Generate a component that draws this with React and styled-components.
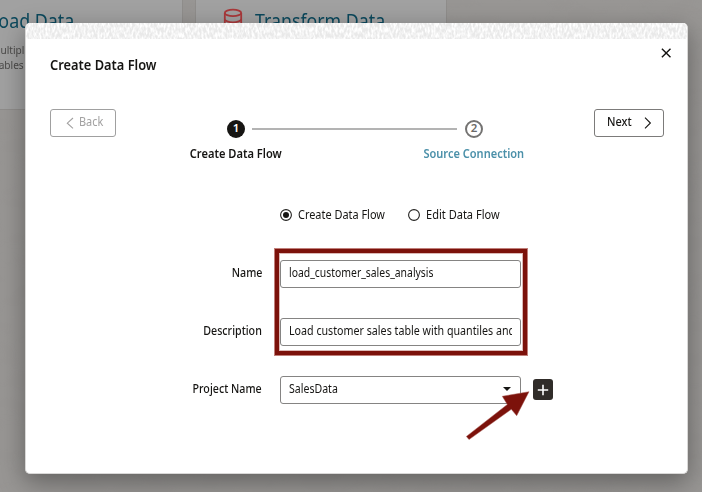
import React from 'react';
import styled, { createGlobalStyle } from 'styled-components';

const GlobalStyle = createGlobalStyle`
  * { box-sizing: border-box; }
  body {
    margin: 0;
    overflow: hidden;
    font-family: "Noto Sans", "Liberation Sans", sans-serif;
    font-size: 12px;
    line-height: 16px;
    color: #161513;
  }
`;

const Page = styled.div`
  position: relative;
  width: 702px;
  height: 492px;
  overflow: hidden;
  background: #979593;
`;

const Texture = styled.svg`
  position: absolute;
  inset: 0;
  width: 100%;
  height: 100%;
`;

const CardRow = styled.div`
  position: relative;
  display: flex;
  gap: 12px;
  height: 110px;
`;

const Card = styled.section`
  flex: none;
  width: ${(p) => p.$width}px;
  background: #a1a1a1;
  border: solid #8f8d8b;
  border-width: 0 1px 1px ${(p) => (p.$first ? 0 : 1)}px;
`;

const Condensed = styled.span`
  display: inline-block;
  white-space: pre;
  transform: scaleX(${(p) => p.$ratio || 0.91});
  transform-origin: ${(p) => p.$origin || 'left'} center;
`;

const CardHeading = styled.h2`
  display: flex;
  align-items: flex-start;
  gap: 11.5px;
  margin: 8px 0 0 ${(p) => p.$indent}px;
  font-size: 19px;
  line-height: 26px;
  font-weight: 400;
  color: #0b485c;
`;

const CardCopy = styled.p`
  margin: 8px 0 0 ${(p) => p.$indent}px;
  font-size: 11px;
  line-height: 15px;
  color: #4b4a49;
  & + & { margin-top: 0; }
`;

const Dialog = styled.div`
  position: absolute;
  left: 25px;
  top: 23px;
  width: 663px;
  height: 451px;
  display: flex;
  flex-direction: column;
  overflow: hidden;
  background: #fff;
  border: 1px solid #d9d8d7;
  border-top: 0;
  border-radius: 5px;
`;

const DialogShadow = styled.div`
  position: absolute;
  left: 25px;
  top: 23px;
  width: 663px;
  height: 451px;
  border-radius: 5px;
  box-shadow: 0 8px 26px rgba(0, 0, 0, 0.36);
`;

const Banner = styled.svg`
  flex: none;
  width: 100%;
  height: 16px;
  background: #f0f0f0;
`;

const TitleBar = styled.header`
  display: flex;
  justify-content: space-between;
  height: 70px;
  padding: 9px 16px 0 24px;
`;

const Title = styled.h1`
  margin: 7px 0 0;
  font-size: 14px;
  line-height: 19px;
  font-weight: 600;
`;

const IconButton = styled.button`
  display: flex;
  width: 10px;
  height: 10px;
  padding: 0;
  border: 0;
  background: none;
`;

const WizardBar = styled.nav`
  display: flex;
  justify-content: space-between;
  height: 90px;
  padding: 0 24px;
`;

const NavButton = styled.button`
  display: flex;
  flex: none;
  align-items: center;
  width: ${(p) => p.$width}px;
  height: 28px;
  padding: 0 0 0 ${(p) => p.$pad}px;
  border: 1px solid ${(p) => (p.$muted ? '#a0a0a0' : '#7c7b7a')};
  border-radius: 3px;
  background: #fff;
  color: ${(p) => (p.$muted ? '#a2a1a1' : '#161513')};
  font: ${(p) => (p.$muted ? 400 : 500)} 12px/16px "Noto Sans", sans-serif;
`;

const ButtonText = styled.span`
  flex: none;
  width: ${(p) => p.$width}px;
  margin: 0 0 3px ${(p) => p.$gap || 0}px;
  text-align: left;
`;

const Steps = styled.ol`
  display: flex;
  flex: none;
  width: 405px;
  margin: 0 0 0 73px;
  padding: 0;
  list-style: none;
`;

const Step = styled.li`
  display: flex;
  flex: none;
  flex-direction: column;
  align-items: center;
  width: ${(p) => p.$width}px;
  padding-top: 11px;
  font-weight: 600;
  color: ${(p) => (p.$active ? '#161513' : '#4b90a9')};
`;

const StepNumber = styled.span`
  display: flex;
  justify-content: center;
  width: 18px;
  height: 18px;
  margin-bottom: 8px;
  border: ${(p) => (p.$active ? '0' : '2px solid #747372')};
  border-radius: 50%;
  background: ${(p) => (p.$active ? '#161513' : '#fff')};
  color: ${(p) => (p.$active ? '#fff' : '#6b6a69')};
  font-size: 11.5px;
  line-height: ${(p) => (p.$active ? 15 : 11)}px;
`;

const Connector = styled.li`
  flex: none;
  width: 205px;
  height: 2px;
  margin: 19px -38px 0 -31px;
  background: #b3b3b3;
`;

const StepLabel = styled.span`
  display: flex;
  justify-content: center;
`;

const Form = styled.form`
  display: flex;
  flex-direction: column;
`;

const RadioRow = styled.div`
  display: flex;
  height: 61px;
  padding-left: 254px;
`;

const RadioOption = styled.label`
  display: flex;
  align-items: flex-start;
  gap: 6px;
  width: 128px;
  padding-top: 8px;
`;

const RadioDot = styled.svg`
  flex: none;
  width: 12px;
  height: 12px;
  margin-top: 2px;
`;

const Field = styled.div`
  display: grid;
  grid-template-columns: 236px 241px 20px;
  column-gap: 18px;
  height: 58px;
  align-items: start;
`;

const FieldLabel = styled.label`
  padding-top: 5px;
  text-align: right;
  font-weight: 500;
`;

const Control = styled.div`
  display: flex;
  justify-content: space-between;
  height: 28px;
  padding: 4px 8px 0;
  overflow: hidden;
  border: 1px solid #858483;
  border-radius: 3px;
  background: #fff;
`;

const Value = styled.span`
  flex: 1;
  min-width: 0;
  overflow: hidden;
`;

const Caret = styled.svg`
  flex: none;
  width: 8px;
  height: 4px;
  margin: 6px 1px 0 0;
`;

const AddButton = styled.button`
  display: flex;
  align-items: center;
  justify-content: center;
  width: 20px;
  height: 21px;
  margin: 3px 0 0 -6px;
  padding: 0;
  border: 0;
  border-radius: 3px;
  background: #302c29;
`;

const Highlight = styled.div`
  position: absolute;
  left: 274px;
  top: 248px;
  width: 254px;
  height: 108px;
  border: 1px solid #c07f7a;
  box-shadow: inset 0 0 0 4px #7c120b, inset 0 0 0 5px #dcb9b6;
`;

const Arrow = styled.svg`
  position: absolute;
  left: 462px;
  top: 386px;
  width: 72px;
  height: 58px;
`;

const DatabaseIcon = () => (
  <svg width="20" height="22" viewBox="0 0 20 22" fill="none" stroke="#a9383a" strokeWidth="1.8">
    <ellipse cx="10" cy="4.9" rx="8.2" ry="3.2" />
    <path d="M1.8 4.9v12.5c0 1.8 3.7 3.2 8.2 3.2s8.2-1.4 8.2-3.2V4.9M1.8 11c0 1.8 3.7 3.3 8.2 3.3s8.2-1.5 8.2-3.3" />
  </svg>
);

const Chevron = ({ left }) => (
  <svg width="8" height="12" viewBox="0 0 8 12" fill="none" stroke="currentColor" strokeWidth="1.1">
    <path d={left ? 'M7 1 1.3 6.2 7 11.4' : 'M1 .6 6.4 6 1 11.4'} />
  </svg>
);

const Radio = ({ checked }) => (
  <RadioDot viewBox="0 0 12 12">
    <circle cx="6" cy="6" r="5.4" fill="none" stroke="#232220" strokeWidth="1.1" />
    {checked && <circle cx="6" cy="6" r="3" fill="#161513" />}
  </RadioDot>
);

export default function App() {
  return (
    <Page>
      <GlobalStyle />
      <Texture aria-hidden="true">
        <filter id="grain">
          <feTurbulence type="fractalNoise" baseFrequency="0.03 0.06" numOctaves="2" seed="4" />
          <feColorMatrix values="0 0 0 0 .45  0 0 0 0 .43  0 0 0 0 .42  .5 0 0 0 -.1" />
        </filter>
        <rect width="100%" height="100%" filter="url(#grain)" opacity=".2" />
      </Texture>
      <CardRow>
        <Card $width={183} $first>
          <CardHeading $indent={-11}><Condensed $ratio={0.94}>Load Data</Condensed></CardHeading>
          <CardCopy $indent={-9}><Condensed $ratio={0.92}>multiple</Condensed></CardCopy>
          <CardCopy $indent={-5}><Condensed $ratio={0.92}>tables</Condensed></CardCopy>
        </Card>
        <Card $width={252}>
          <CardHeading $indent={27}><DatabaseIcon /><Condensed $ratio={0.935}>Transform Data</Condensed></CardHeading>
        </Card>
      </CardRow>

      <DialogShadow />
      <Dialog role="dialog">
        <Banner aria-hidden="true">
          <filter id="weave" x="0" y="0" width="100%" height="100%">
            <feTurbulence type="fractalNoise" baseFrequency="0.5 0.2" numOctaves="2" seed="7" />
            <feColorMatrix values="0 0 0 0 1  0 0 0 0 1  0 0 0 0 1  3 0 0 0 -1.1" />
          </filter>
          <rect width="100%" height="16" fill="#e9e9e9" />
          <rect width="100%" height="16" filter="url(#weave)" />
        </Banner>
        <TitleBar>
          <Title><Condensed $ratio={0.918}>Create Data Flow</Condensed></Title>
          <IconButton aria-label="Close">
            <svg width="10" height="10" viewBox="0 0 10 10" stroke="#161513" strokeWidth="1.4">
              <path d="M.9.7l8.6 8.6M9.5.7.9 9.3" />
            </svg>
          </IconButton>
        </TitleBar>
        <WizardBar>
          <NavButton $width={66} $pad={15} $muted>
            <Chevron left />
            <ButtonText $width={28} $gap={5}><Condensed>Back</Condensed></ButtonText>
          </NavButton>
          <Steps>
            <Step $width={94} $active>
              <StepNumber $active>1</StepNumber>
              <StepLabel><Condensed $ratio={0.925} $origin="center">Create Data Flow</Condensed></StepLabel>
            </Step>
            <Connector />
            <Step $width={110}>
              <StepNumber>2</StepNumber>
              <StepLabel><Condensed $ratio={0.92} $origin="center">Source Connection</Condensed></StepLabel>
            </Step>
          </Steps>
          <NavButton $width={70} $pad={12}>
            <ButtonText $width={37}><Condensed>Next</Condensed></ButtonText>
            <Chevron />
          </NavButton>
        </WizardBar>
        <Form>
          <RadioRow>
            <RadioOption><Radio checked /><Condensed>Create Data Flow</Condensed></RadioOption>
            <RadioOption><Radio /><Condensed $ratio={0.92}>Edit Data Flow</Condensed></RadioOption>
          </RadioRow>
          <Field>
            <FieldLabel><Condensed $ratio={0.89} $origin="right">Name</Condensed></FieldLabel>
            <Control><Value><Condensed $ratio={0.867}>load_customer_sales_analysis</Condensed></Value></Control>
          </Field>
          <Field>
            <FieldLabel><Condensed $ratio={0.89} $origin="right">Description</Condensed></FieldLabel>
            <Control><Value><Condensed $ratio={0.89}>Load customer sales table with quantiles and</Condensed></Value></Control>
          </Field>
          <Field>
            <FieldLabel><Condensed $ratio={0.89} $origin="right">Project Name</Condensed></FieldLabel>
            <Control>
              <Value><Condensed $ratio={0.88}>SalesData</Condensed></Value>
              <Caret viewBox="0 0 8 4"><path d="M0 0h8L4 4z" fill="#161513" /></Caret>
            </Control>
            <AddButton type="button" aria-label="Add project">
              <svg width="12" height="12" viewBox="0 0 12 12" stroke="#fff" strokeWidth="1.6">
                <path d="M6 .8v10.4M.8 6h10.4" />
              </svg>
            </AddButton>
          </Field>
        </Form>
      </Dialog>
      <Highlight />
      <Arrow viewBox="462 386 72 58">
        <path
          d="M529 391.7 516.7 415.7 511.3 409.3 469 439.6 466.4 436.4 507.3 404.5 502.3 396.3Z"
          fill="#7c120b"
          stroke="#a65a54"
          strokeWidth=".5"
        />
      </Arrow>
    </Page>
  );
}
